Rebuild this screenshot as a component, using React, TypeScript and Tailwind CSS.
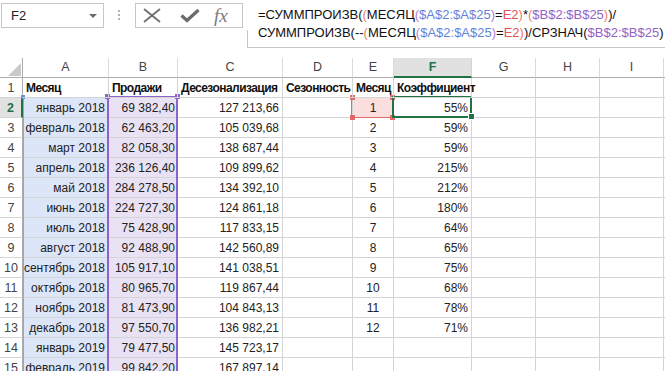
import React from "react";

type Row = [string, string, string, string, string, string];

const rows: Row[] = [
  ["Месяц", "Продажи", "Десезонализация", "Сезонность", "Месяц", "Коэффициент"],
  ["январь 2018", "69 382,40", "127 213,66", "", "1", "55%"],
  ["февраль 2018", "62 463,20", "105 039,68", "", "2", "59%"],
  ["март 2018", "82 058,30", "138 687,44", "", "3", "59%"],
  ["апрель 2018", "236 126,40", "109 899,62", "", "4", "215%"],
  ["май 2018", "284 278,50", "134 392,10", "", "5", "212%"],
  ["июнь 2018", "224 727,30", "124 861,18", "", "6", "180%"],
  ["июль 2018", "75 428,90", "117 833,15", "", "7", "64%"],
  ["август 2018", "92 488,90", "142 560,89", "", "8", "65%"],
  ["сентябрь 2018", "105 917,10", "141 038,51", "", "9", "75%"],
  ["октябрь 2018", "80 965,70", "119 867,44", "", "10", "68%"],
  ["ноябрь 2018", "81 473,90", "104 843,13", "", "11", "78%"],
  ["декабрь 2018", "97 550,70", "136 982,21", "", "12", "71%"],
  ["январь 2019", "79 477,50", "145 723,17", "", "", ""],
  ["февраль 2019", "99 842,20", "167 897,14", "", "", ""],
];

const letters = ["A", "B", "C", "D", "E", "F", "G", "H", "I"];
const widths = [
  "w-[86px]",
  "w-[69px]",
  "w-[105px]",
  "w-[70px]",
  "w-[41px]",
  "w-[78px]",
  "w-[64px]",
  "w-[64px]",
  "w-[64px]",
];

const cell = "shrink-0 h-[20px] border-r border-b border-[#d4d4d4] whitespace-nowrap pt-[2px] leading-[17px]";

// data cells: alignment and fills per column
const dataCls = [
  "w-[86px] bg-[#dde5f8] text-right pr-[3px]",
  "w-[69px] bg-[#e9e2f4] text-right pr-[2px]",
  "w-[105px] text-right pr-[3px]",
  "w-[70px]",
  "w-[41px] text-center",
  "w-[78px] text-right pr-[3px]",
];

const Formula = ({ second }: { second?: boolean }) => {
  const blue = "text-[#5f84dc]";
  const red = "text-[#e2525a]";
  const purple = "text-[#9262c8]";
  const paren = "text-[#ec8062]";
  const paren2 = "text-[#b27ad6]";
  if (!second)
    return (
      <div>
        =СУММПРОИЗВ(<span className={paren}>(</span>МЕСЯЦ
        <span className={paren2}>(</span>
        <span className={blue}>$A$2:$A$25</span>
        <span className={paren2}>)</span>=<span className={red}>E2</span>
        <span className={paren}>)</span>*<span className={paren}>(</span>
        <span className={purple}>$B$2:$B$25</span>
        <span className={paren}>)</span>)/
      </div>
    );
  return (
    <div>
      СУММПРОИЗВ(--<span className={paren}>(</span>МЕСЯЦ
      <span className={paren2}>(</span>
      <span className={blue}>$A$2:$A$25</span>
      <span className={paren2}>)</span>=<span className={red}>E2</span>
      <span className={paren}>)</span>)/СРЗНАЧ(
      <span className={purple}>$B$2:$B$25</span>)
    </div>
  );
};

const App = () => {
  return (
    <div className="h-[371px] w-[665px] overflow-hidden bg-white font-['Liberation_Sans',Arial,sans-serif] text-[12px] text-[#222]">
      {/* formula bar */}
      <div className="flex h-[48px]">
        <div className="flex w-[248px] shrink-0 flex-col">
          <div className="flex h-[30px] items-start pt-[3px]">
            <div className="ml-[1px] flex h-[25px] w-[103px] items-center justify-between border border-[#c6c6c6] pl-[9px] pr-[6px] text-[13px] text-[#222]">
              F2
              <span className="h-0 w-0 border-l-[4px] border-r-[4px] border-t-[4px] border-l-transparent border-r-transparent border-t-[#6b6b6b]" />
            </div>
            <div className="ml-[14px] mt-[7px] flex flex-col gap-[2px]">
              <span className="h-[2px] w-[2px] bg-[#b4b4b4]" />
              <span className="h-[2px] w-[2px] bg-[#b4b4b4]" />
              <span className="h-[2px] w-[2px] bg-[#b4b4b4]" />
            </div>
            <div className="ml-[15px] flex h-[25px] w-[108px] items-center border border-[#c6c6c6] pl-[7px]">
              <svg width="18" height="15" viewBox="0 0 18 15">
                <path d="M1 1 L17 14 M17 1 L1 14" stroke="#6e6e6e" strokeWidth="1.8" fill="none" />
              </svg>
              <svg className="ml-[19px]" width="20" height="15" viewBox="0 0 20 15">
                <path d="M1.5 7.5 L7 12.5 L18.5 2" stroke="#6b6b6b" strokeWidth="3.2" fill="none" />
              </svg>
              <span className="ml-[14px] font-['Liberation_Serif',serif] text-[19px] italic leading-none text-[#7a7a7a]">
                fx
              </span>
            </div>
          </div>
          <div className="flex-1 border-r border-[#c6c6c6]" />
        </div>
        <div className="min-w-0 flex-1 overflow-hidden whitespace-nowrap border-b border-[#c6c6c6] pl-[10px] pt-[6px] text-[13px] leading-[18px] text-[#111]">
          <Formula />
          <Formula second />
        </div>
      </div>
      <div className="h-[10px]" />

      {/* grid */}
      <div className="relative">
        {/* column headers */}
        <div className="flex h-[20px]">
          <div className="h-[20px] w-[23px] shrink-0 border-b border-r border-[#ababab]">
            <svg width="22" height="19" viewBox="0 0 22 19">
              <polygon points="21,5 21,18 8,18" fill="#c9c9c9" />
            </svg>
          </div>
          {letters.map((l, i) =>
            l === "F" ? (
              <div
                key={l}
                className={`${widths[i]} flex h-[20px] shrink-0 items-center justify-center border-b-2 border-r border-b-[#217346] border-r-[#d4d4d4] bg-[#e1e1e1] pt-[1px] text-[12.5px] font-bold text-[#217346]`}
              >
                {l}
              </div>
            ) : (
              <div
                key={l}
                className={`${widths[i]} flex h-[20px] shrink-0 items-center justify-center border-b border-r border-b-[#ababab] border-r-[#dadada] text-[12.5px] text-[#444]`}
              >
                {l}
              </div>
            )
          )}
          <div className="h-[20px] flex-1 border-b border-[#ababab]" />
        </div>

        {rows.map((r, ri) => {
          const n = ri + 1;
          return (
            <div key={n} className="flex h-[20px]">
              {n === 2 ? (
                <div className="h-[20px] w-[23px] shrink-0 border-b border-r-2 border-b-[#d4d4d4] border-r-[#217346] bg-[#e1e1e1] pt-[2px] text-center text-[12.5px] font-bold leading-[17px] text-[#217346]">
                  {n}
                </div>
              ) : (
                <div className="h-[20px] w-[23px] shrink-0 border-b border-r border-b-[#d4d4d4] border-r-[#ababab] pt-[2px] text-center text-[12.5px] leading-[17px] text-[#444]">
                  {n}
                </div>
              )}
              {n === 1
                ? r.map((t, ci) => (
                    <div
                      key={ci}
                      className={`${cell} ${widths[ci]} relative z-[1] pl-[3px] font-bold tracking-[-0.55px] text-[#111]`}
                    >
                      {t}
                    </div>
                  ))
                : r.map((t, ci) => (
                    <div
                      key={ci}
                      className={`${cell} overflow-hidden ${dataCls[ci]} ${ci === 4 && n === 2 ? "bg-[#fbdede]" : ""}`}
                    >
                      {t}
                    </div>
                  ))}
              <div className={`${cell} w-[64px]`} />
              <div className={`${cell} w-[64px]`} />
              <div className={`${cell} w-[64px]`} />
              <div className="h-[20px] flex-1 border-b border-[#d4d4d4]" />
            </div>
          );
        })}

        {/* range highlights (overlay) */}
        <div className="absolute left-[22px] top-[39px] h-[1px] w-[86px] bg-[#6f8fdc]" />
        <div className="absolute bottom-0 left-[23px] top-[39px] w-[1px] bg-[#8ea6e0]" />
        <div className="absolute left-[21px] top-[37px] h-[4px] w-[4px] bg-[#6f8fdc]" />
        <div className="absolute left-[107px] top-[38px] h-[2px] w-[71px] bg-[#8c64cc]" />
        <div className="absolute bottom-0 left-[107px] top-[38px] w-[2px] bg-[#8c64cc]" />
        <div className="absolute bottom-0 left-[176px] top-[38px] w-[2px] bg-[#8c64cc]" />
        <div className="absolute left-[105px] top-[36px] h-[5px] w-[5px] bg-[#8c64cc]" />
        <div className="absolute left-[175px] top-[36px] h-[5px] w-[5px] bg-[#8c64cc]" />

        {/* E2 reference */}
        <div className="absolute left-[351px] top-[39px] h-[21px] w-[42px] border border-[#e46a6a]" />
        <div className="absolute left-[350px] top-[37px] h-[5px] w-[5px] bg-[#e46a6a]" />
        <div className="absolute left-[390px] top-[37px] h-[5px] w-[5px] bg-[#e46a6a]" />
        <div className="absolute left-[350px] top-[57px] h-[5px] w-[5px] bg-[#e46a6a]" />
        <div className="absolute left-[390px] top-[57px] h-[5px] w-[5px] bg-[#e46a6a]" />

        {/* active cell F2 */}
        <div className="absolute left-[392px] top-[38px] h-[22px] w-[80px] border-2 border-[#217346]" />
        <div className="absolute left-[468px] top-[55px] h-[7px] w-[7px] border border-white bg-[#217346]" />
      </div>
    </div>
  );
};

export default App;
